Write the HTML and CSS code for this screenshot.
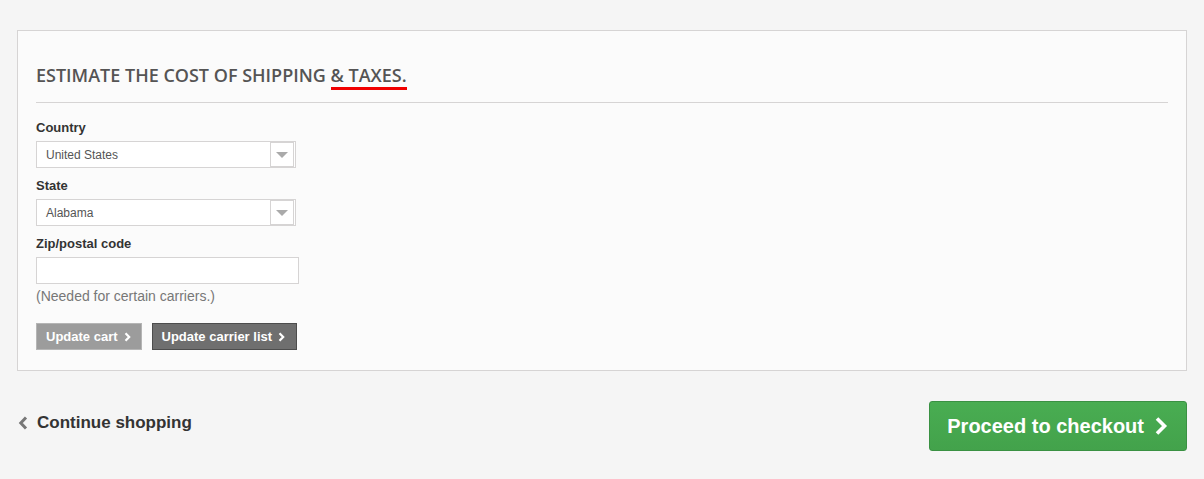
FILE: index.html
```html
<!DOCTYPE html>
<html>
<head>
<meta charset="utf-8">
<link rel="stylesheet" href="styles.css">
</head>
<body>
<div class="page">
  <div class="box">
    <h3 class="box-title">ESTIMATE THE COST OF SHIPPING <span class="mark">&amp; TAXES.</span></h3>
    <div class="rule"></div>
    <div class="group">
      <label class="lbl">Country</label>
      <div class="select"><span>United States</span><span class="arrow"><i></i></span></div>
    </div>
    <div class="group">
      <label class="lbl">State</label>
      <div class="select"><span>Alabama</span><span class="arrow"><i></i></span></div>
    </div>
    <div class="group group-last">
      <label class="lbl">Zip/postal code</label>
      <div class="input"></div>
    </div>
    <p class="note">(Needed for certain carriers.)</p>
    <div class="btns">
      <span class="btn btn-light">Update cart <svg width="7" height="10" viewBox="0 0 7 10"><path d="M1.5 1.2 L5.2 5 L1.5 8.8" fill="none" stroke="#fff" stroke-width="2.2"/></svg></span>
      <span class="btn btn-dark">Update carrier list <svg width="7" height="10" viewBox="0 0 7 10"><path d="M1.5 1.2 L5.2 5 L1.5 8.8" fill="none" stroke="#fff" stroke-width="2.2"/></svg></span>
    </div>
  </div>
  <div class="bottom">
    <a class="continue"><svg width="10" height="14" viewBox="0 0 10 14"><path d="M8 1.5 L2.8 7 L8 12.5" fill="none" stroke="#777" stroke-width="3"/></svg>Continue shopping</a>
    <a class="checkout">Proceed to checkout <svg width="14" height="20" viewBox="0 0 14 20"><path d="M3 2.5 L10.5 10 L3 17.5" fill="none" stroke="#fff" stroke-width="3.6"/></svg></a>
  </div>
</div>
</body>
</html>
```

FILE: styles.css
```css
html, body { margin: 0; padding: 0; }
body { background: #f5f5f5; font-family: Arial, "Liberation Sans", sans-serif; color: #333; }
.page { padding: 30px 17px 0 17px; }
.box { background: #fbfbfb; border: 1px solid #d6d4d4; padding: 34px 18px 20px 18px; }
.box-title { margin: 0; font-family: "Open Sans", sans-serif; font-weight: 600; font-size: 18px; line-height: 20px; color: #555454; }
.mark { border-bottom: 3px solid #f10000; }
.rule { height: 1px; background: #d6d4d4; margin: 17px 0 16px 0; }
.group { margin-bottom: 9px; }
.group-last { margin-bottom: 0; }
.lbl { display: block; font-weight: bold; font-size: 13px; line-height: 18px; margin-bottom: 4px; color: #333; }
.select { width: 249px; height: 25px; border: 1px solid #d6d4d4; background: #fff; display: flex; align-items: center; justify-content: space-between; padding-left: 9px; font-size: 12px; color: #555; }
.arrow { width: 22px; height: 23px; border: 1px solid #d6d4d4; margin-right: 1px; display: flex; align-items: center; justify-content: center; background: #fff; }
.arrow i { width: 0; height: 0; border-left: 6px solid transparent; border-right: 6px solid transparent; border-top: 6px solid #aaa; margin-top: 1px; }
.input { width: 261px; height: 25px; border: 1px solid #d6d4d4; background: #fff; }
.note { margin: 3px 0 0 0; font-size: 14px; line-height: 18px; color: #777; }
.btns { display: flex; gap: 10px; margin-top: 18px; }
.btn { display: flex; align-items: center; gap: 6px; height: 25px; padding: 0 10px 0 9px; font-weight: bold; font-size: 13px; color: #fff; }
.btn-light { background: #9c9c9c; border: 1px solid #b5b5b5; }
.btn-dark { background: #6f6f6f; border: 1px solid #4d4d4d; padding-right: 11px; }
.bottom { display: flex; justify-content: space-between; align-items: center; margin-top: 30px; }
.continue { display: flex; align-items: center; gap: 9px; font-weight: bold; font-size: 17px; color: #333; padding-left: 1px; margin-bottom: 6px; }
.checkout { display: flex; align-items: center; gap: 10px; height: 48px; padding: 0 18px 0 17px; white-space: nowrap; background: linear-gradient(#49ad52, #43a24b); border: 1px solid #3a9143; border-radius: 3px; color: #fff; font-weight: bold; font-size: 20px; }
```
